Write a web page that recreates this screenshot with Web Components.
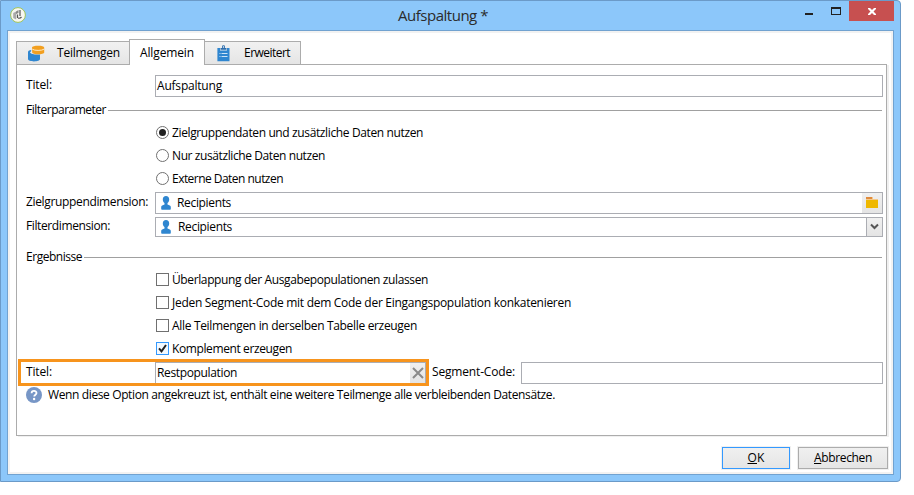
<!DOCTYPE html>
<html lang="de"><head><meta charset="utf-8"><title>Aufspaltung</title>
<style>
body{margin:0;background:#fff;font:12px/16px "Open Sans","Noto Sans",sans-serif;color:#000}
</style></head><body>
<split-dialog></split-dialog>
<script>
const define=(name,css,html,extra)=>customElements.define(name,class extends HTMLElement{
  constructor(){super();this.attachShadow({mode:'open'}).innerHTML=`<style>${css}</style>${html}`;}
  connectedCallback(){if(extra)extra(this);}
});

/* One line of text, tracked so that it fills the width given in "w". */
define('fit-text',`:host{display:inline-block;white-space:pre;flex:none;justify-self:start}`,`<slot></slot>`,el=>{
  const w=+el.getAttribute('w');
  const n=el.textContent.length;
  const nat=el.getBoundingClientRect().width;
  el.style.letterSpacing=((w-nat)/n).toFixed(3)+'px';
  el.style.width=w+'px';
});

define('person-icon',`:host{display:block;width:12px;height:14px;flex:none}svg{display:block}`,
`<svg width="12" height="14" viewBox="0 0 12 14"><path fill="#2f86d0" d="M6 0C8 0 9.300 1.400 9.200 3.400 9.200 5 8.300 6.300 7.500 7v1.600c1.700.5 3.300 1 3.300 2.500V13q0 .8-.8.8H2q-.8 0-.8-.8v-1.900c0-1.500 1.600-2 3.300-2.500V7C3.700 6.300 2.800 5 2.800 3.400 2.700 1.400 4 0 6 0z"/></svg>`);

define('data-icon',`:host{display:block;width:17px;height:17px;flex:none}svg{display:block}`,
`<svg width="17" height="17" viewBox="0 0 17 17"><path fill="#2f86d0" d="M0 7C.3 5.500 1.500 5.100 3.200 5v1.300L2 7.200C2.500 9 8 10 12 9.400V14c0 1.500-3 2.400-6 2.400S0 15.500 0 14z"/><path fill="#f29f1f" d="M4 2.800C4 1.400 7 .8 10.200.8s6 .6 6 2v4.600c0 1.200-2.900 1.800-6 1.800s-6-.6-6-1.800z"/><path fill="none" stroke="#fff0d5" stroke-width=".9" d="M4.300 4.200c2 1.600 9.700 1.600 11.700 0"/></svg>`);

define('clipboard-icon',`:host{display:block;width:13px;height:17px;flex:none}svg{display:block}`,
`<svg width="13" height="17" viewBox="0 0 13 17"><path fill="#2f86d0" d="M.4 3H3v2.500h7V3h2.500v13.300H.4z"/><path fill="#2c6cab" d="M3.500 4.800V3H5V1.200Q5 .2 6.500.2T8 1.200V3h1.500v1.800z"/><circle cx="6.500" cy="2" r=".8" fill="#fff"/><path stroke="#cfe4f6" d="M2.500 8.500h1m1 0h6m-8 3h1m1 0h6"/></svg>`);

define('tab-item',`:host{display:flex;box-sizing:border-box;height:23px;border:1px solid #acacac;border-bottom:0;background:linear-gradient(#f1f1f1,#e5e5e5);align-items:center}
:host([active]){height:26px;background:#fff;margin:0 -1px;position:relative;padding-bottom:0}`,`<slot></slot>`);

define('text-field',`:host{display:flex;box-sizing:border-box;height:22px;border:1px solid #abadb3;background:#fff;align-items:stretch;min-width:0}
.v{flex:1;display:flex;align-items:center;padding:0 0 0 1px}`,`<div class="v"><slot></slot></div><slot name="button"></slot>`);

define('field-button',`:host{display:flex;width:20px;background:linear-gradient(#f0f0f0,#e4e4e4);align-items:center;justify-content:center}`,`<slot></slot>`);

define('group-heading',`:host{display:flex;height:14px;align-items:center;gap:2px;margin-right:1px}i{flex:1;height:1px;background:#a0a0a0;position:relative}`,`<slot></slot><i></i>`);

define('radio-option',`:host{display:flex;height:23px;align-items:center;gap:3px;padding-left:130px}svg{display:block}.d{display:none}:host([checked]) .d{display:block}`,
`<svg width="13" height="13" viewBox="0 0 13 13"><circle cx="6.500" cy="6.500" r="6" fill="#fff" stroke="#707070"/><circle class="d" cx="6.500" cy="6.500" r="3.500" fill="#212121"/></svg><slot></slot>`);

define('check-option',`:host{display:flex;height:23px;align-items:center;gap:3px;padding-left:130px}svg{display:block}rect{fill:#fff;stroke:#707070}path{display:none}
:host([checked]) rect{fill:#f3f9ff;stroke:#3399ff}:host([checked]) path{display:block}`,
`<svg width="13" height="13" viewBox="0 0 13 13"><rect x=".5" y=".5" width="12" height="12"/><path d="M3 6.300l2.500 3L10 3" fill="none" stroke="#212121" stroke-width="2"/></svg><slot></slot>`);

define('push-button',`:host{display:flex;box-sizing:border-box;height:22px;border:1px solid #acacac;background:linear-gradient(#f0f0f0,#e5e5e5);box-shadow:0 0 0 1px #f0f0f0;align-items:center;justify-content:center}
:host([primary]){border-color:#3399ff}`,`<slot></slot>`);

define('title-bar',`:host{display:flex;height:29px;align-items:flex-start;color:#2b2b2b}
.logo{width:16px;margin:6px 0 0 9px}.t{flex:1;display:flex;padding:4px 0 0 372px;font-size:15px;line-height:20px}
.c{display:flex;align-items:flex-start}svg{display:block}.x{width:45px;height:20px;background:#c75050;margin-right:6px}`,
`<svg class="logo" width="16" height="16" viewBox="0 0 16 16"><circle cx="8" cy="8" r="7.400" fill="#f7f7f0" stroke="#9fc357" stroke-width="1"/><path d="M3.200 6l3-1.500v8l-3-1.500z" fill="#aaa"/><path d="M6 4.500L8.500 3v3L6 7z" fill="#888"/><path d="M10 3v6M7.500 7.500v3.500M8 11q2 .8 3.500-1" fill="none" stroke="#555" stroke-width="1.200"/></svg>
<div class="t"><slot></slot></div>
<div class="c"><svg width="44" height="20" viewBox="805 1 44 20" shape-rendering="crispEdges"><path fill="#212121" d="M805 13h8v2h-8zM831 7h10v8h-10zm1 2v5h8V9z" fill-rule="evenodd"/></svg>
<svg class="x" width="45" height="20" viewBox="0 0 45 20"><path d="M19 7h2l2 2 2-2h2v1l-2.500 2.500L27 13v1h-2l-2-2-2 2h-2v-1l2.500-2.500L19 8z" fill="#fff"/></svg></div>`);

define('split-dialog',`
:host{display:flex;flex-direction:column;box-sizing:border-box;width:901px;height:482px;border:1px solid #6b9ac8;border-radius:0 4px 4px 0;background:#8cc7fa}
.client{box-sizing:border-box;display:flex;flex-direction:column;width:887px;margin:0 0 0 6px;height:445px;border:1px solid #71a2d0;box-shadow:inset 0 0 0 2px #f2f2f2;background:#fff;padding:8px 5px 0 8px}
.tabs{display:flex;align-items:flex-end;height:25px;position:relative;z-index:1;margin-bottom:-1px;flex:none}
.tabs tab-item[active]{margin-bottom:-1px}
.panel{box-sizing:border-box;width:871px;height:372px;flex:none;margin-top:1px;border:1px solid #acacac;box-shadow:2px 1px 0 #f0f0f0;padding:10px 3px 0 9px;display:flex;flex-direction:column;background:#fff}
.row{display:grid;grid-template-columns:129px 1fr;position:relative}
.row>fit-text{margin-top:2px}
.last{grid-template-columns:129px 271px 6px 83px 6px 1fr}
.last:after{content:"";position:absolute;box-sizing:border-box;left:-8px;top:-3px;width:411px;height:27px;border:3px solid #f7941d}
.help{display:flex;align-items:center;height:18px;gap:6px;margin-top:2px}
.foot{display:flex;justify-content:flex-end;gap:8px;margin-top:11px}
svg{display:block}`,
`<title-bar><fit-text w="90">Aufspaltung *</fit-text></title-bar>
<div class="client">
<div class="tabs">
 <tab-item style="width:114px"><data-icon style="margin:0 12px 0 11px"></data-icon><fit-text w="63">Teilmengen</fit-text></tab-item>
 <tab-item active style="width:76px"><fit-text w="54" style="margin-left:10px">Allgemein</fit-text></tab-item>
 <tab-item style="width:97px"><clipboard-icon style="margin:0 14px 0 12px"></clipboard-icon><fit-text w="46">Erweitert</fit-text></tab-item>
</div>
<div class="panel">
 <div class="row"><fit-text w="26">Titel:</fit-text><text-field><fit-text w="65">Aufspaltung</fit-text></text-field></div>
 <group-heading style="margin-top:6px"><fit-text w="80">Filterparameter</fit-text></group-heading>
 <radio-option checked style="margin-top:4px"><fit-text w="251">Zielgruppendaten und zusätzliche Daten nutzen</fit-text></radio-option>
 <radio-option><fit-text w="153">Nur zusätzliche Daten nutzen</fit-text></radio-option>
 <radio-option><fit-text w="111">Externe Daten nutzen</fit-text></radio-option>
 <div class="row" style="margin-top:2px"><fit-text w="122">Zielgruppendimension:</fit-text><text-field><person-icon style="margin:0 5px 0 3px"></person-icon><fit-text w="54">Recipients</fit-text><field-button slot="button"><svg width="12" height="12" viewBox="0 0 12 12"><path fill="#e08a3c" d="M0 0h6v2H0z"/><path fill="#f5c98a" d="M6 0h1v2H6zM0 2h12v1H0z"/><path fill="#efb800" d="M0 3h12v8H0z"/></svg></field-button></text-field></div>
 <div class="row" style="margin-top:3px"><fit-text w="84" style="margin-top:1px">Filterdimension:</fit-text><text-field style="height:20px"><person-icon style="margin:0 6px 0 3px"></person-icon><fit-text w="54">Recipients</fit-text><field-button slot="button" style="width:15px;border-left:1px solid #abadb3"><svg width="9" height="8" viewBox="0 0 9 8"><path d="M1 1.500l3.500 3.500L8 1.500" fill="none" stroke="#555" stroke-width="2"/></svg></field-button></text-field></div>
 <group-heading style="margin-top:13px"><fit-text w="56">Ergebnisse</fit-text></group-heading>
 <check-option style="margin-top:4px"><fit-text w="256">Überlappung der Ausgabepopulationen zulassen</fit-text></check-option>
 <check-option><fit-text w="399">Jeden Segment-Code mit dem Code der Eingangspopulation konkatenieren</fit-text></check-option>
 <check-option><fit-text w="245">Alle Teilmengen in derselben Tabelle erzeugen</fit-text></check-option>
 <check-option checked><fit-text w="120">Komplement erzeugen</fit-text></check-option>
 <div class="row last" style="margin-top:2px"><fit-text w="26">Titel:</fit-text><text-field><fit-text w="80">Restpopulation</fit-text><field-button slot="button" style="width:15px"><svg width="12" height="12" viewBox="0 0 12 12"><path d="M1 1l10 10M11 1L1 11" stroke="#8a8a8a" stroke-width="2"/></svg></field-button></text-field><i></i><fit-text w="83">Segment-Code:</fit-text><i></i><text-field></text-field></div>
 <div class="help"><svg width="16" height="16" viewBox="0 0 16 16"><circle cx="8" cy="8" r="8" fill="#7796c6"/><path d="M5.600 6.200C5.600 3.200 10.500 3.300 10.500 6 10.500 7.700 8.200 7.700 8.200 9.600" fill="none" stroke="#fff" stroke-width="1.800"/><circle cx="8.100" cy="12" r="1.200" fill="#fff"/></svg><fit-text w="507">Wenn diese Option angekreuzt ist, enthält eine weitere Teilmenge alle verbleibenden Datensätze.</fit-text></div>
</div>
<div class="foot"><push-button primary style="width:68px"><fit-text w="17"><u>O</u>K</fit-text></push-button><push-button style="width:90px"><fit-text w="58"><u>A</u>bbrechen</fit-text></push-button></div>
</div>`);
</script></body></html>
